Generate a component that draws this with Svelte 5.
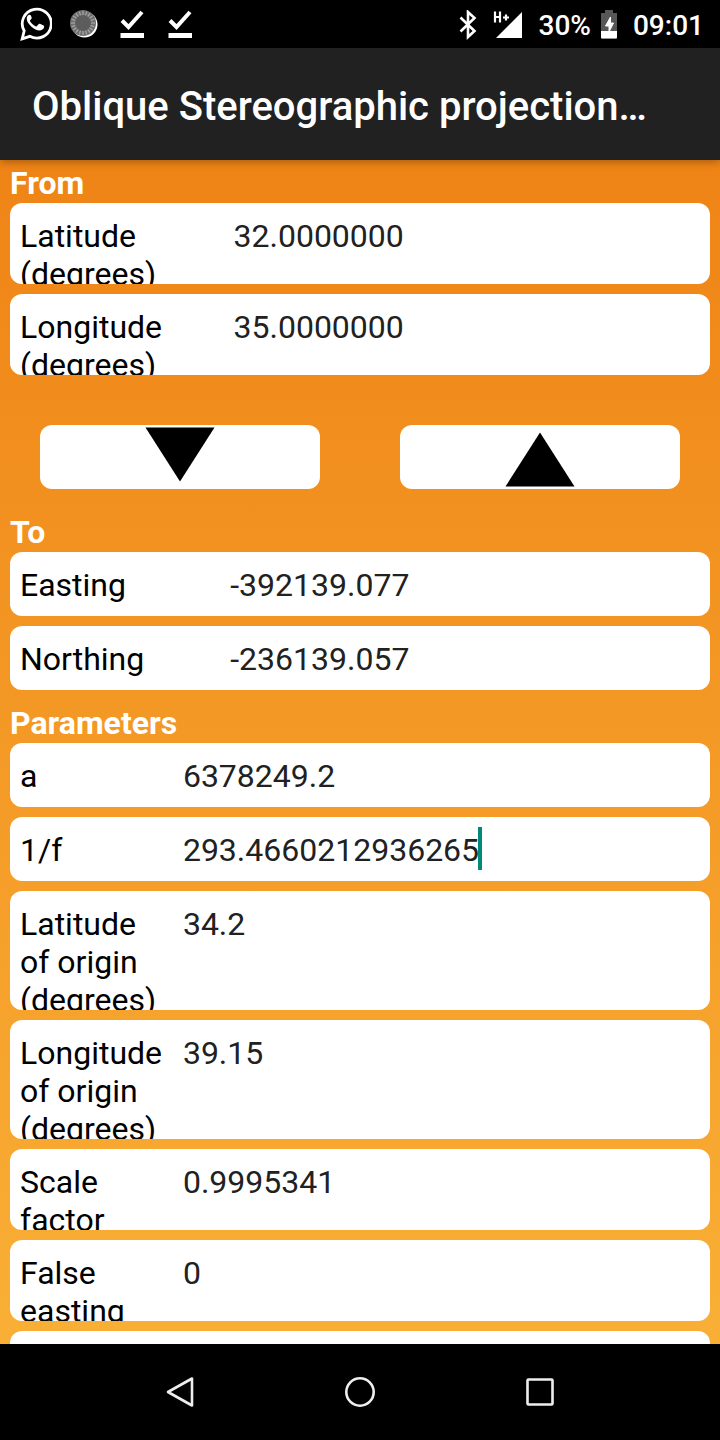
<script>
  let from = $state([
    { id: 'lat', label: 'Latitude (degrees)', value: '32.0000000' },
    { id: 'lon', label: 'Longitude (degrees)', value: '35.0000000' },
  ]);
  let to = $state([
    { id: 'easting', label: 'Easting', value: '-392139.077' },
    { id: 'northing', label: 'Northing', value: '-236139.057' },
  ]);
  let params = $state([
    { id: 'a', label: 'a', value: '6378249.2' },
    { id: 'invf', label: '1/f', value: '293.4660212936265', active: true },
    { id: 'lat0', label: 'Latitude of origin (degrees)', value: '34.2' },
    { id: 'lon0', label: 'Longitude of origin (degrees)', value: '39.15' },
    { id: 'k0', label: 'Scale factor', value: '0.9995341' },
    { id: 'fe', label: 'False easting', value: '0' },
    { id: 'fn', label: 'False northing', value: '0' },
  ]);
  const ticks = Array.from({ length: 20 }, (_, i) => i * 18);
</script>

{#snippet rows(items)}
  {#each items as item (item.id)}
    <div class="row">
      <label for={item.id}>{item.label}</label>
      <div class="value">
        <input id={item.id} type="text" class:active={item.active} bind:value={item.value} />
        {#if item.active}<span class="caret"></span>{/if}
      </div>
    </div>
  {/each}
{/snippet}

{#snippet check()}
  <svg width="32" height="32" viewBox="0 0 32 32" aria-hidden="true">
    <path d="M6 12.500l6.500 6.500L26 4" fill="none" stroke="#fff" stroke-width="4" />
    <path d="M4.500 25h23.500v5H4.500z" fill="#fff" />
  </svg>
{/snippet}

<div class="screen">
  <header class="status">
    <div class="notices">
      <svg width="32" height="34" viewBox="0 0 32 34" aria-hidden="true">
        <path d="M2.200 31.800l2-8A14.500 14.500 0 1 1 9.800 29.300z" fill="none" stroke="#fff" stroke-width="2.800" />
        <path d="M11 8.800c-.5-1-1-1-1.700-1-.8 0-2.600 1.200-2.600 3.900 0 2.600 2 5.300 4.500 7.700 2.800 2.600 6 4 8.300 4 2 0 4.200-1.400 4.500-3 .2-1 .1-1.500-.4-1.800l-3.700-1.800c-.7-.3-1-.1-1.400.4l-1.500 1.900c-.4.400-.8.400-1.400.1-2.500-1.200-4.300-2.900-5.500-5-.3-.6-.1-.9.300-1.300 1.200-1.300 1.500-1.800 1.200-2.500z" fill="#fff" />
      </svg>
      <svg width="32" height="32" viewBox="0 0 32 32" aria-hidden="true">
        <circle cx="16.500" cy="16.500" r="13" fill="#fff" />
        <circle cx="15" cy="15" r="13" fill="#6e6e6e" />
        {#each ticks as angle (angle)}
          <path d="M15 3v5" stroke="#a8a8a8" stroke-width="1.200" transform="rotate({angle} 15 15)" />
        {/each}
        <circle cx="15" cy="15" r="8" fill="#5c5c5c" />
      </svg>
      {@render check()}
      {@render check()}
    </div>
    <div class="system">
      <svg width="18" height="30" viewBox="0 0 18 30" aria-hidden="true">
        <path d="M1.500 7.500l14 13.500L9 27V2l6.500 6L1.500 21.500" fill="none" stroke="#fff" stroke-width="2.600" />
      </svg>
      <svg width="30" height="30" viewBox="0 0 30 30" aria-hidden="true">
        <path d="M29 2v26H3z" fill="#fff" />
        <path d="M2 1.500v11M7 1.500v11M2 7h5M10 7.500h6M13 4.500v6" fill="none" stroke="#fff" stroke-width="2.200" />
      </svg>
      <span>30%</span>
      <svg class="battery" width="16" height="30" viewBox="0 0 16 30" aria-hidden="true">
        <path d="M4 0h8v3h4v24.500a1 1 0 0 1-1 1h-14a1 1 0 0 1-1-1V3h4z" fill="#575757" />
        <path d="M0 21h16v6.500a1 1 0 0 1-1 1H1a1 1 0 0 1-1-1z" fill="#fff" />
        <path d="M9.500 7L4.500 16H8V22L12.500 13H9.500z" fill="#fff" stroke="#fff" />
      </svg>
      <time>09:01</time>
    </div>
  </header>

  <div class="appbar">
    <h1>Oblique Stereographic projection…</h1>
  </div>

  <main>
    <section class="from">
      <h2>From</h2>
      {@render rows(from)}
    </section>

    <div class="actions">
      <button type="button" aria-label="Convert down">
        <svg width="70" height="64" viewBox="0 0 70 64"><path d="M0.500 2.500h69L35 56.500z" /></svg>
      </button>
      <button type="button" aria-label="Convert up">
        <svg width="70" height="64" viewBox="0 0 70 64"><path d="M0.500 61.500h69L35 7.500z" /></svg>
      </button>
    </div>

    <section class="to">
      <h2>To</h2>
      {@render rows(to)}
    </section>

    <section class="params">
      <h2>Parameters</h2>
      {@render rows(params)}
    </section>
  </main>

  <nav>
    <button type="button" aria-label="Back">
      <svg width="36" height="36" viewBox="0 0 36 36"><path d="M30 4.500v27L6 18z" /></svg>
    </button>
    <button type="button" aria-label="Home">
      <svg width="36" height="36" viewBox="0 0 36 36"><circle cx="18" cy="18" r="13.700" /></svg>
    </button>
    <button type="button" aria-label="Recent apps">
      <svg width="36" height="36" viewBox="0 0 36 36"><rect x="5.500" y="5.500" width="25" height="25" rx="1" /></svg>
    </button>
  </nav>
</div>

<style>
  :global(body) {
    margin: 0;
  }

  .screen {
    display: flex;
    flex-direction: column;
    height: 100vh;
    font-family: Roboto, sans-serif;
    font-size: 32px;
    line-height: 38px;
    color: #000;
    background: #000;
  }

  svg {
    display: block;
    flex: none;
  }

  .status {
    flex: none;
    display: flex;
    justify-content: space-between;
    align-items: center;
    height: 48px;
    padding: 0 16px 0 20px;
    box-sizing: border-box;
    font-size: 28px;
    font-weight: 500;
    color: #fff;
  }

  .notices,
  .system {
    display: flex;
    align-items: center;
    gap: 16px;
  }

  .system {
    padding-top: 2px;
  }

  .system span,
  .system time {
    padding-top: 2px;
  }

  .battery {
    margin-left: -6px;
  }

  .appbar {
    flex: none;
    display: flex;
    align-items: center;
    height: 112px;
    padding: 6px 32px 0;
    box-sizing: border-box;
    background: #212121;
    box-shadow: 0 2px 8px rgba(0, 0, 0, 0.3);
    z-index: 1;
  }

  h1 {
    margin: 0;
    font-size: 40px;
    line-height: 48px;
    font-weight: 500;
    color: #fff;
    white-space: nowrap;
    overflow: hidden;
    text-overflow: ellipsis;
  }

  main {
    flex: 1;
    min-height: 0;
    overflow: auto;
    scrollbar-width: none;
    padding: 4px 10px 0;
    background: linear-gradient(#ef8416, #f9af36);
  }

  h2 {
    margin: 0;
    padding-bottom: 1px;
    font-size: 32px;
    line-height: 38px;
    font-weight: 700;
    color: #fff;
  }

  .row {
    display: grid;
    grid-template-columns: var(--columns);
    align-items: start;
    min-height: 64px;
    margin-bottom: 10px;
    padding: 0 10px;
    box-sizing: border-box;
    border-radius: 12px;
    background: #fff;
    overflow: hidden;
  }

  .from {
    --columns: minmax(0, 5fr) minmax(0, 11fr);
  }

  .to {
    --columns: minmax(0, 4fr) minmax(0, 9fr);
  }

  .params {
    --columns: minmax(0, 5fr) minmax(0, 16fr);
    margin-top: 14px;
  }

  /* The last line of a wrapped label is clipped by the row's lower edge. */
  label {
    padding: 14px 10px 0 0;
    margin-bottom: -9px;
  }

  .value {
    display: flex;
    align-items: flex-start;
    padding: 10px 0 0 1px;
  }

  input {
    width: 100%;
    height: 46px;
    padding: 0;
    border: 0;
    outline: 0;
    background: none;
    font: inherit;
    color: #212121;
  }

  input.active {
    width: auto;
    field-sizing: content;
    caret-color: transparent;
  }

  .caret {
    flex: none;
    width: 4px;
    height: 43px;
    margin-left: -1px;
    background: #00897b;
  }

  .actions {
    display: grid;
    grid-template-columns: 1fr 1fr;
    gap: 80px;
    padding: 40px 30px 24px;
  }

  .actions button {
    display: flex;
    justify-content: center;
    height: 64px;
    padding: 0;
    border: 0;
    border-radius: 12px;
    background: #fff;
  }

  nav {
    flex: none;
    display: flex;
    justify-content: center;
    gap: 80px;
    height: 96px;
    background: #000;
  }

  nav button {
    display: flex;
    align-items: center;
    justify-content: center;
    width: 100px;
    padding: 0;
    border: 0;
    background: none;
  }

  nav svg {
    fill: none;
    stroke: #eee;
    stroke-width: 2.6;
    stroke-linejoin: round;
  }
</style>
